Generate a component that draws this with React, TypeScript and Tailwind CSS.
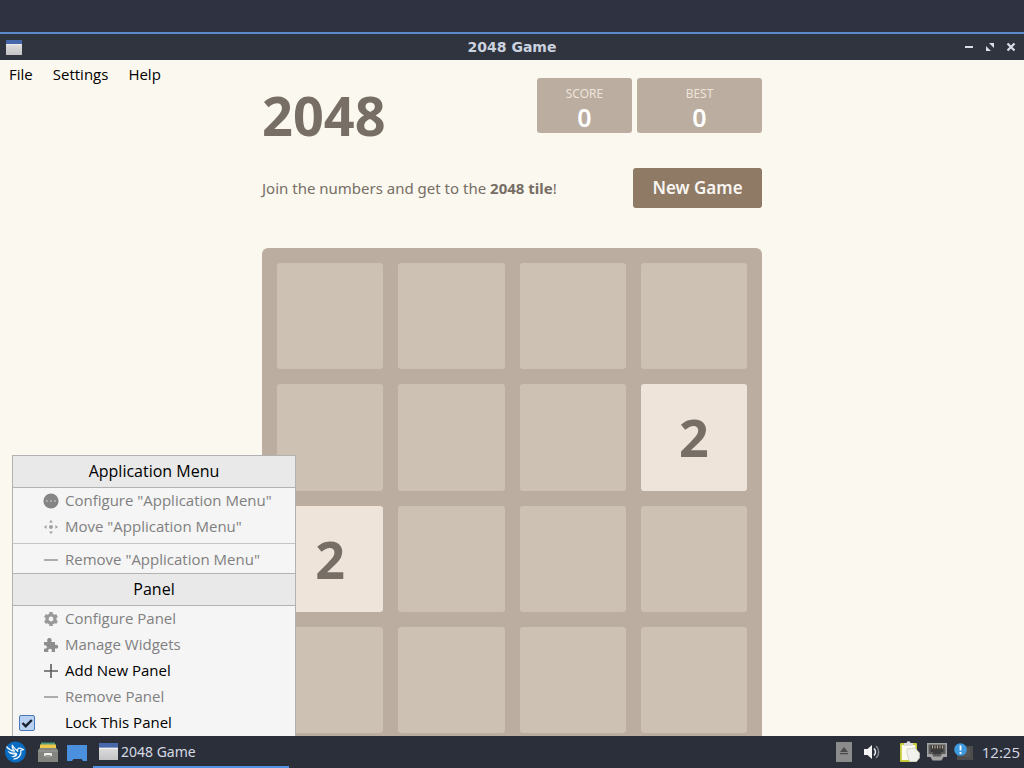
import { useState } from "react";
import type { ReactNode } from "react";
import clsx from "clsx";

const START_TILES = [
  0, 0, 0, 0,
  0, 0, 0, 2,
  2, 0, 0, 0,
  0, 0, 0, 0,
];

function WindowIcon({ className }: { className: string }) {
  return (
    <svg viewBox="0 0 18 16" className={className} preserveAspectRatio="none" aria-hidden="true">
      <defs>
        <linearGradient id="window-body" x1="0" y1="0" x2="0" y2="1">
          <stop offset="0" stopColor="#e6e6e6" />
          <stop offset="1" stopColor="#c4c4c6" />
        </linearGradient>
      </defs>
      <rect width="18" height="16" fill="url(#window-body)" />
      <rect width="18" height="4.5" fill="#4668ab" />
      <rect y="4.5" width="18" height="1" fill="#f4f4f4" />
    </svg>
  );
}

function TitleBar() {
  return (
    <header className="grid h-[26px] shrink-0 grid-cols-[1fr_auto_1fr] items-center bg-[#2f343f] px-1.5">
      <WindowIcon className="h-[15px] w-4" />
      <h1 className="font-['DejaVu_Sans',sans-serif] text-[14px] font-bold text-[#cbd2df]">2048 Game</h1>
      <div className="flex items-center justify-end gap-[9px] pr-px text-[#d9dfea]">
        <button aria-label="Minimize" className="h-3 w-3">
          <svg viewBox="0 0 12 12" aria-hidden="true">
            <path d="M2 6h8" stroke="currentColor" strokeWidth="2" />
          </svg>
        </button>
        <button aria-label="Restore" className="h-3 w-3">
          <svg viewBox="0 0 12 12" fill="currentColor" aria-hidden="true">
            <path d="M5 2h5v5zM2 5v5h5z" />
          </svg>
        </button>
        <button aria-label="Close" className="h-3 w-3">
          <svg viewBox="0 0 12 12" aria-hidden="true">
            <path d="M2.5 2.5l7 7M9.5 2.5l-7 7" stroke="currentColor" strokeWidth="2.2" />
          </svg>
        </button>
      </div>
    </header>
  );
}

function MenuBar() {
  return (
    <nav className="absolute left-0 top-0 flex gap-5 px-[9px] py-1 text-[15px] leading-[20px] text-black">
      <button>File</button>
      <button>Settings</button>
      <button>Help</button>
    </nav>
  );
}

function ScoreBox({ label, value, className }: { label: string; value: number; className: string }) {
  return (
    <div className={clsx("flex h-[55px] flex-col items-center rounded-[3px] bg-[#bbada0] pt-2 text-center", className)}>
      <span className="text-[12px] leading-[16px] text-[#eee4da]">{label}</span>
      <span className="text-[25px] font-semibold leading-[30px] text-white">{value}</span>
    </div>
  );
}

function Board({ tiles }: { tiles: number[] }) {
  return (
    <div className="mt-10 grid grid-cols-4 gap-[15px] rounded-md bg-[#bbada0] p-[15px]">
      {tiles.map((value, i) => (
        <div
          key={i}
          className={clsx(
            "flex aspect-square items-center justify-center rounded-[3px] text-[52px] font-bold leading-none text-[#776e65]",
            value ? "bg-[#eee4da]" : "bg-[#cdc1b4]",
          )}
        >
          {value || null}
        </div>
      ))}
    </div>
  );
}

function Game() {
  const [tiles, setTiles] = useState(START_TILES);
  return (
    <main className="mx-auto w-[500px] pt-[18px] font-['Noto_Sans',sans-serif] text-[#776e65]">
      <div className="flex h-[90px] items-start justify-between">
        <h2 className="text-[54px] font-bold leading-[74px]">2048</h2>
        <div className="flex gap-[5px]">
          <ScoreBox label="SCORE" value={0} className="w-[95px]" />
          <ScoreBox label="BEST" value={0} className="w-[125px]" />
        </div>
      </div>
      <div className="flex items-center justify-between">
        <p className="text-[15px]">
          Join the numbers and get to the <strong className="font-bold">2048 tile</strong>!
        </p>
        <button
          onClick={() => setTiles(START_TILES)}
          className="h-10 w-[129px] rounded-[3px] bg-[#8f7a66] text-[17px] font-semibold text-[#f9f6f2]"
        >
          New Game
        </button>
      </div>
      <Board tiles={tiles} />
    </main>
  );
}

function MenuHeading({ children }: { children: ReactNode }) {
  return (
    <h3 className="flex h-[33px] items-center justify-center border-y border-[#b2b2b2] bg-[#e9e9e9] pb-0.5 text-[16px] text-black">
      {children}
    </h3>
  );
}

function MenuItem({ icon, children, disabled }: { icon: ReactNode; children: ReactNode; disabled?: boolean }) {
  return (
    <button
      disabled={disabled}
      className={clsx(
        "flex h-[26px] w-full items-center gap-1.5 pl-[30px] text-left",
        disabled ? "text-[#808080]" : "text-black",
      )}
    >
      <svg viewBox="0 0 16 16" className="h-4 w-4 shrink-0" aria-hidden="true">
        {icon}
      </svg>
      <span className="pb-0.5">{children}</span>
    </button>
  );
}

const dots = (
  <>
    <circle cx="8" cy="8" r="7.6" fill="#858585" />
    <path d="M3 7.2h2v1.6H3zM7 7.2h2v1.6H7zM11 7.2h2v1.6h-2z" fill="#b9b9b9" />
  </>
);
const move = (
  <path
    d="M8 1L10 3.6H6zM8 15l2-2.6H6zM1 8l2.6-2v4zM15 8l-2.6-2v4zM8 6a2 2 0 1 1 0 4a2 2 0 1 1 0-4"
    fill="#a0a0a0"
  />
);
const minus = <path d="M1 8h14" stroke="#9a9a9a" strokeWidth="1.6" />;
const plus = <path d="M1 8h14M8 1v14" stroke="#5c5c5c" strokeWidth="1.6" />;
const gear = (
  <>
    <circle cx="8" cy="8" r="4" fill="none" stroke="#999999" strokeWidth="3.2" />
    <path
      d="M6.3 1h3.4v3H6.3zM6.3 12h3.4v3H6.3zM1.1 6l1.7-2.9 2.6 1.5-1.7 2.9zM10.6 11.4l1.7-2.9 2.6 1.5-1.7 2.9zM2.8 12.9L1.1 10l2.6-1.5 1.7 2.9zM12.3 7.5l-1.7-2.9 2.6-1.5L14.9 6z"
      fill="#999999"
    />
  </>
);
const puzzle = (
  <path
    d="M1 5h3.8C3.4 3.6 4.2 1 6.4 1S9.4 3.6 8 5h4v3.2c1.3-1 3.2-.2 3.2 1.5S13.3 12.2 12 11.2V15H8.5c1-1.8 0-3.2-1.5-3.2S4.5 13.2 5.5 15H1v-3.6c1.8.8 2.8-.3 2.8-1.5S2.8 7.800 1 8.600z"
    fill="#8e8e8e"
  />
);

function PanelMenu() {
  const [locked, setLocked] = useState(true);
  return (
    <aside className="absolute bottom-8 left-3 w-[284px] border-x border-[#b2b2b2] bg-[#f5f5f5] text-[15px] leading-[20px]">
      <MenuHeading>Application Menu</MenuHeading>
      <MenuItem icon={dots} disabled>Configure "Application Menu"</MenuItem>
      <MenuItem icon={move} disabled>Move "Application Menu"</MenuItem>
      <hr className="my-[3px] border-[#c6c6c6]" />
      <MenuItem icon={minus} disabled>Remove "Application Menu"</MenuItem>
      <MenuHeading>Panel</MenuHeading>
      <MenuItem icon={gear} disabled>Configure Panel</MenuItem>
      <MenuItem icon={puzzle} disabled>Manage Widgets</MenuItem>
      <MenuItem icon={plus}>Add New Panel</MenuItem>
      <MenuItem icon={minus} disabled>Remove Panel</MenuItem>
      <label className="flex h-[26px] items-center gap-[30px] pl-1.5 text-black">
        <span className="grid h-4 w-4 place-items-center">
          <input
            type="checkbox"
            checked={locked}
            onChange={(e) => setLocked(e.target.checked)}
            className="col-start-1 row-start-1 h-4 w-4 appearance-none rounded-xs border border-[#4878b8] bg-[#b8d1f3]"
          />
          {locked && (
            <svg viewBox="0 0 16 16" className="pointer-events-none col-start-1 row-start-1 h-4 w-4" aria-hidden="true">
              <path d="M3.500 8l3.200 3.200L12.800 5" fill="none" stroke="#1a2230" strokeWidth="2.400" />
            </svg>
          )}
        </span>
        <span className="pb-0.5">Lock This Panel</span>
      </label>
    </aside>
  );
}

function Taskbar() {
  return (
    <footer className="flex h-8 shrink-0 items-center justify-between bg-[#2b2f3a] pl-1 pr-1 text-[15px] text-[#d5dae4]">
      <div className="flex h-full items-center">
        <button aria-label="Application menu" className="w-[22px]">
          <svg viewBox="0 0 22 22" aria-hidden="true">
            <circle cx="11.5" cy="11" r="10.5" fill="#0a6cc0" />
            <path
              d="M2.500 5.500C4.800 8.500 7.500 9.800 10.500 10.200C8.600 8.400 8 6.200 8.300 4.200C10 7.300 11.800 8.600 13.800 10.200C12.800 8.200 14.300 6.800 16 7.200L19.500 8.600L16.800 9.400C17.600 13.800 15 17.600 9.500 18.200"
              fill="none"
              stroke="#e8f3fc"
              strokeWidth="1.300"
              strokeLinejoin="round"
            />
            <path
              d="M3.500 9.500C6 11.600 8.500 11.600 11.500 11.400C13.500 11.600 14 13.500 12.500 15C11 16.400 8.500 16.500 6.500 15.500C8.500 15.500 10.300 14.800 11 13.200C8 14 4.500 12.800 3.500 9.500z"
              fill="#e8f3fc"
            />
          </svg>
        </button>
        <button aria-label="File manager" className="ml-[11px] w-[22px]">
          <svg viewBox="0 0 22 22" aria-hidden="true">
            <path d="M4 1.500h14v5H4z" fill="#4f9b78" />
            <path d="M3 3.500h16v4H3z" fill="#eec84a" />
            <path d="M2.500 7h17L21 9.500V21H1V9.500z" fill="#85857f" />
            <path d="M1 9.500h20v1H1z" fill="#9d9d98" />
            <rect x="7" y="12" width="8" height="3.200" rx="1.200" fill="#f2f2f2" />
            <path d="M8.500 14.200h5v.8h-5z" fill="#777777" />
          </svg>
        </button>
        <button aria-label="Show desktop" className="ml-[7px] w-[22px]">
          <svg viewBox="0 0 22 22" aria-hidden="true">
            <path d="M1 4h20v16h-4l-1.500-2h-8L6 20H1z" fill="#4a90df" />
          </svg>
        </button>
        <button className="ml-[5px] flex h-full w-[196px] items-center gap-[3px] border-b-2 border-[#5294e2] pl-1.5 font-['Noto_Sans',sans-serif] text-[14px]">
          <WindowIcon className="h-[17px] w-[19px]" />
          2048 Game
        </button>
      </div>
      <div className="flex items-center">
        <button aria-label="Removable media" className="w-4">
          <svg viewBox="0 0 16 20" aria-hidden="true">
            <rect width="16" height="20" fill="#8b8b8b" />
            <path d="M8 5l4 5H4zM4 11h8v1.300H4z" fill="#4b4b4b" />
          </svg>
        </button>
        <button aria-label="Volume" className="ml-3 w-4">
          <svg viewBox="0 0 16 16" aria-hidden="true">
            <path d="M0 5h3.500L8 1v14l-4.500-4H0z" fill="#f4f4f4" />
            <path d="M10 4.500c2 2 2 5 0 7" fill="none" stroke="#f0f0f0" strokeWidth="1.500" />
            <path d="M12 2c3.600 3.200 3.600 8.800 0 12" fill="none" stroke="#8b8f99" strokeWidth="1.400" />
          </svg>
        </button>
        <button aria-label="Clipboard" className="ml-5 w-5">
          <svg viewBox="0 0 20 22" aria-hidden="true">
            <rect y="2" width="17" height="19" rx="1" fill="#c7cb3a" />
            <path d="M1.800 4h13.500v15H1.800z" fill="#fbfbef" />
            <path d="M4 2h2.500C7-.2 10-.2 10.500 2H13v3H4z" fill="#dedede" />
            <path d="M7 8l8-1 4.500 5v5l-3 3.500H9.500L7 13z" fill="#f1f1ee" stroke="#c9c9bd" strokeWidth=".7" />
          </svg>
        </button>
        <button aria-label="Network" className="ml-[7px] w-5">
          <svg viewBox="0 0 20 18" aria-hidden="true">
            <path d="M0 0h20v14h-3.500l-2 3.500h-9L3.500 14H0z" fill="#a3a3a3" />
            <path d="M1.500 1.500h17V11H15l-1.500 2.500h-7L5 11H1.500z" fill="#5c5c5c" />
            <path d="M3.500 2.500h13V9h-2l-1 2h-7l-1-2h-2z" fill="#3b3b3b" />
            <path d="M5.500 2.500v3M8 2.500v3M10.500 2.500v3M13 2.500v3M15.500 2.500v3" stroke="#b9ad98" />
          </svg>
        </button>
        <button aria-label="Updates" className="ml-[7px] w-5">
          <svg viewBox="0 0 20 18" aria-hidden="true">
            <path d="M6 3h13v14H3V9z" fill="#4c4c4c" />
            <path d="M10 5h6v9h-6z" fill="#555555" />
            <circle cx="6.500" cy="6.500" r="6.300" fill="#3f9ae0" />
            <path d="M6.500 2.500v5M6.500 9v2" stroke="#ffffff" strokeWidth="1.800" />
          </svg>
        </button>
        <time className="ml-2">12:25</time>
      </div>
    </footer>
  );
}

export default function App() {
  return (
    <div className="relative flex h-screen flex-col overflow-hidden bg-[#2f3140] font-['Open_Sans','Noto_Sans',sans-serif]">
      <div className="h-8 shrink-0 bg-[#2f3240]" />
      <div className="flex min-h-0 flex-1 flex-col border-t-2 border-[#5b8acb]">
        <TitleBar />
        <div className="relative min-h-0 flex-1 overflow-hidden bg-[#faf8ef]">
          <MenuBar />
          <Game />
        </div>
      </div>
      <Taskbar />
      <PanelMenu />
    </div>
  );
}
